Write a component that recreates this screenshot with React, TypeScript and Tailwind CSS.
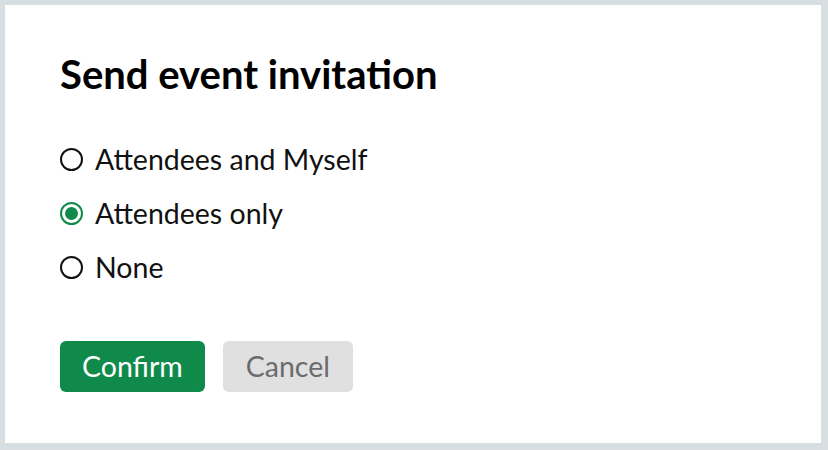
import React, { useState } from 'react'

const options = ['Attendees and Myself', 'Attendees only', 'None']

const Radio = ({ checked }: { checked: boolean }) =>
  checked ? (
    <span className="w-[23px] h-[23px] shrink-0 rounded-full border-2 border-[#0f8a4a] flex items-center justify-center">
      <span className="w-[13px] h-[13px] rounded-full bg-[#0f8a4a]"></span>
    </span>
  ) : (
    <span className="w-[23px] h-[23px] shrink-0 rounded-full border-2 border-[#111]"></span>
  )

export default function App() {
  const [selected, setSelected] = useState(1)

  return (
    <div className="w-[828px] h-[450px] bg-[#d7dfe3] pt-[5px] pl-[5px] pr-[7px] pb-[7px] font-['Lato','Liberation_Sans',sans-serif]">
      <div className="w-full h-full bg-white pl-[55px] pt-[45px]">
        <h1 className="text-[40px] leading-[48px] font-bold text-black">Send event invitation</h1>

        <div className="mt-[45px] flex flex-col gap-[22px]">
          {options.map((opt, i) => (
            <label
              key={opt}
              className="flex items-center gap-[12px] h-[32px] cursor-pointer"
              onClick={() => setSelected(i)}
            >
              <Radio checked={selected === i} />
              <span className="text-[28.5px] text-[#111]">{opt}</span>
            </label>
          ))}
        </div>

        <div className="mt-[58px] flex gap-[18px]">
          <button className="h-[51px] px-[22px] rounded-[6px] bg-[#0f8a4a] text-white text-[28.5px]">
            Confirm
          </button>
          <button className="h-[51px] px-[23px] rounded-[6px] bg-[#e0e0e0] text-[#6b6b6e] text-[28.5px]">
            Cancel
          </button>
        </div>
      </div>
    </div>
  )
}
